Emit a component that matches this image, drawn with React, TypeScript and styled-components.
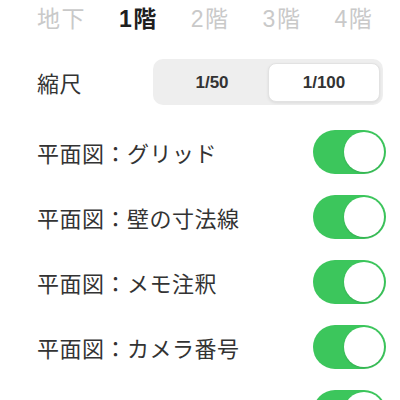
import { FC, useState } from "react";
import styled, { createGlobalStyle } from "styled-components";

const GlobalStyle = createGlobalStyle`
  html, body {
    margin: 0;
    padding: 0;
    background: #ffffff;
  }
  body {
    font-family: "Liberation Sans", "Noto Sans CJK JP", sans-serif;
    -webkit-font-smoothing: antialiased;
  }
`;

const Page = styled.div`
  width: 400px;
  height: 400px;
  box-sizing: border-box;
  padding: 0 14px 0 37px;
  overflow: hidden;
`;

const Tabs = styled.div`
  height: 34px;
  display: flex;
  align-items: center;
  gap: 33px;
`;

const Tab = styled.button<{ $active?: boolean }>`
  border: none;
  background: none;
  padding: 0;
  font-family: inherit;
  font-size: 23px;
  letter-spacing: 1.5px;
  font-weight: ${(p) => (p.$active ? 600 : 400)};
  color: ${(p) => (p.$active ? "#1f1f1f" : "#c9c9c9")};
  cursor: pointer;
`;

const ScaleRow = styled.div`
  margin-top: 25px;
  height: 46px;
  display: flex;
  align-items: center;
  justify-content: space-between;
`;

const Label = styled.span`
  font-size: 22px;
  color: #333333;
  letter-spacing: 0.5px;
`;

const Segmented = styled.div`
  width: 230px;
  height: 46px;
  margin-right: 3px;
  box-sizing: border-box;
  padding: 4px 3px 3px 3px;
  display: grid;
  grid-template-columns: 1fr 1fr;
  background: #eeeeee;
  border-radius: 10px;
`;

const Segment = styled.button<{ $selected?: boolean }>`
  border: 1px solid ${(p) => (p.$selected ? "#e2e2e2" : "transparent")};
  border-radius: 8px;
  background: ${(p) => (p.$selected ? "#ffffff" : "transparent")};
  box-shadow: ${(p) => (p.$selected ? "0 1px 3px rgba(0,0,0,0.08)" : "none")};
  font-family: inherit;
  font-size: 17px;
  font-weight: 700;
  color: #333333;
  cursor: pointer;
`;

const List = styled.div`
  margin-top: 14px;
  display: flex;
  flex-direction: column;
`;

const Row = styled.div`
  height: 65px;
  display: flex;
  align-items: center;
  justify-content: space-between;
`;

const Switch = styled.button<{ $on: boolean }>`
  position: relative;
  width: 73px;
  height: 44px;
  padding: 0;
  border: none;
  border-radius: 22px;
  background: ${(p) => (p.$on ? "#3cc65c" : "#e5e5ea")};
  cursor: pointer;

  &::after {
    content: "";
    position: absolute;
    top: 2px;
    left: ${(p) => (p.$on ? "31px" : "2px")};
    width: 40px;
    height: 40px;
    border-radius: 50%;
    background: #ffffff;
    box-shadow: 0 1px 2px rgba(0, 0, 0, 0.12);
  }
`;

const floors = ["地下", "1階", "2階", "3階", "4階"];
// the last row sits below the fold; only its switch peeks in
const layers = [
  "平面図：グリッド",
  "平面図：壁の寸法線",
  "平面図：メモ注釈",
  "平面図：カメラ番号",
  "",
];

const App: FC = () => {
  const [floor, setFloor] = useState(1);
  const [scale, setScale] = useState("1/100");
  const [on, setOn] = useState<boolean[]>(layers.map(() => true));

  return (
    <Page>
      <GlobalStyle />
      <Tabs>
        {floors.map((f, i) => (
          <Tab key={f} $active={i === floor} onClick={() => setFloor(i)}>
            {f}
          </Tab>
        ))}
      </Tabs>
      <ScaleRow>
        <Label>縮尺</Label>
        <Segmented>
          {["1/50", "1/100"].map((s) => (
            <Segment key={s} $selected={s === scale} onClick={() => setScale(s)}>
              {s}
            </Segment>
          ))}
        </Segmented>
      </ScaleRow>
      <List>
        {layers.map((l, i) => (
          <Row key={i}>
            <Label>{l}</Label>
            <Switch
              role="switch"
              aria-checked={on[i]}
              $on={on[i]}
              onClick={() => setOn(on.map((v, j) => (j === i ? !v : v)))}
            />
          </Row>
        ))}
      </List>
    </Page>
  );
};

export default App;
